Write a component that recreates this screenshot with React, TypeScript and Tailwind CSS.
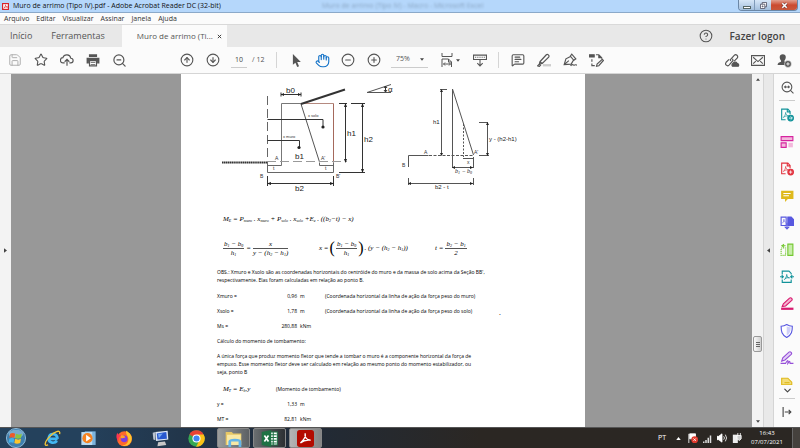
import type { ReactNode } from 'react';
import {
  ChevronDown,
  CircleArrowDown,
  CircleArrowUp,
  CircleHelp,
  CircleMinus,
  CirclePlus,
  Hand,
  MessageSquareText,
  Save,
  Star,
  ZoomOut,
} from 'lucide-react';

interface ToolButtonProps {
  label: string;
  children: ReactNode;
  className?: string;
}

const ToolButton = ({ label, children, className = 'w-[26px]' }: ToolButtonProps) => (
  <button aria-label={label} className={`flex h-6 shrink-0 items-center justify-center ${className}`}>
    {children}
  </button>
);

const Caret = ({ className = '' }: { className?: string }) => (
  <svg viewBox="0 0 6 4" className={`h-[3px] w-1 shrink-0 ${className}`} fill="#444">
    <path d="M0 0h6L3 4z" />
  </svg>
);

const TitleBar = () => (
  <header className="flex h-[13px] shrink-0 items-center justify-between border-b border-[#8ba9c9] bg-[#b5d7fb] pl-[2px] text-[7px]">
    <div className="flex w-80 items-center gap-1">
      <svg viewBox="0 0 12 12" className="size-[7px] shrink-0">
        <rect x="1" y="1" width="10" height="10" fill="#fff" stroke="#d8232a" strokeWidth="2" />
        <path d="M3 9c2-2 3-4 3-6 0 3 1 4 4 4-3-1-5 0-7 2z" fill="none" stroke="#d8232a" />
      </svg>
      <h1 className="leading-3 whitespace-nowrap text-[#111]">
        Muro de arrimo (Tipo IV).pdf - Adobe Acrobat Reader DC (32-bit)
      </h1>
    </div>
    <span className="flex-1 leading-3 whitespace-nowrap text-[#8aa6c4] blur-[1px]">
      Muro de arrimo (Tipo IV) - Macro - Microsoft Excel
    </span>
    <div className="mr-[2px] flex h-[11px] self-start overflow-hidden rounded-b-sm border border-t-0 border-[#6b87a6]">
      <button aria-label="Minimizar" className="flex w-4 items-center justify-center border-r border-[#7f9ab8] bg-linear-to-b from-[#d6e6f7] to-[#a3bfdd]">
        <span className="mt-1 h-[3px] w-2 border border-[#566] bg-white" />
      </button>
      <button aria-label="Restaurar" className="flex w-4 items-center justify-center bg-linear-to-b from-[#d6e6f7] to-[#a3bfdd]">
        <svg viewBox="0 0 8 8" className="size-[7px]" fill="#fff" stroke="#556">
          <path d="M2.500.500h5v5h-5z" />
          <path d="M.5 2.500h5v5h-5zM2.500 4.500h1v1h-1z" />
        </svg>
      </button>
      <button aria-label="Fechar" className="flex w-[26px] items-center justify-center bg-linear-to-b from-[#e0a091] via-[#cb4a30] to-[#c8573c]">
        <svg viewBox="0 0 8 8" className="size-[7px]">
          <path d="m1.500 1.500 5 5m0-5-5 5" stroke="#633" strokeWidth="3" />
          <path d="m1.500 1.500 5 5m0-5-5 5" stroke="#fff" strokeWidth="1.800" />
        </svg>
      </button>
    </div>
  </header>
);

const MenuBar = () => (
  <nav className="flex h-[11px] shrink-0 items-center gap-[7px] bg-[#fbfbfb] pl-1 text-[7px] leading-[10px] text-[#333]">
    {['Arquivo', 'Editar', 'Visualizar', 'Assinar', 'Janela', 'Ajuda'].map((item) => (
      <button key={item}>{item}</button>
    ))}
  </nav>
);

const TabBar = () => (
  <div className="flex h-[23px] shrink-0 border-t border-[#d9d9d9] bg-[#e8e8e8] text-[#555]">
    <button className="pl-[10px] text-[9px]">Início</button>
    <button className="ml-[19px] text-[9px]">Ferramentas</button>
    <div className="ml-[17px] flex w-[105px] items-center justify-between bg-[#fbfbfb] pr-[5px] pl-[15px]">
      <button className="text-[8px] whitespace-nowrap">Muro de arrimo (Ti...</button>
      <button aria-label="Fechar guia">
        <svg viewBox="0 0 6 6" className="size-[5px]" stroke="#333" strokeWidth="1.100">
          <path d="m1 1 4 4m0-4-4 4" />
        </svg>
      </button>
    </div>
    <div className="ml-auto flex items-center gap-[17px] pr-[15px]">
      <button aria-label="Ajuda">
        <CircleHelp size={14} color="#555" strokeWidth={1.8} />
      </button>
      <button className="text-[10px] font-semibold text-[#444]">Fazer logon</button>
    </div>
  </div>
);

const Toolbar = () => (
  <div className="flex h-[27px] shrink-0 items-center border-b border-[#d5d5d5] bg-[#fbfbfb] pr-[3px] pl-[2px] text-[7px] text-[#555]">
    <ToolButton label="Salvar"><Save size={14} color="#aaa" strokeWidth={1.6} /></ToolButton>
    <ToolButton label="Favorito"><Star size={14} strokeWidth={1.9} /></ToolButton>
    <ToolButton label="Enviar para a nuvem">
      <svg viewBox="0 0 24 24" className="size-[14px]" fill="none" stroke="currentColor" strokeWidth="2">
        <path d="M8 17H5.500a4.500 4.500 0 0 1-.5-9A7 7 0 0 1 18.500 9a4 4 0 0 1 0 8H16" />
        <path d="M12 22V11m-4 4 4-4 4 4" />
      </svg>
    </ToolButton>
    <ToolButton label="Imprimir">
      <svg viewBox="0 0 24 24" className="size-[14px]" fill="currentColor">
        <path d="M5 2h14v5H5zM1 8h22v10h-4v-4H5v4H1z" />
        <path d="M6 13h12v9H6z" fill="#fff" stroke="currentColor" strokeWidth="2" />
        <path d="M8 16h8v1H8zM8 19h8v1H8z" />
      </svg>
    </ToolButton>
    <ToolButton label="Reduzir visualização"><ZoomOut size={15} strokeWidth={1.9} /></ToolButton>
    <ToolButton label="Página anterior" className="ml-[42px] w-[26px]"><CircleArrowUp size={14} strokeWidth={1.9} /></ToolButton>
    <ToolButton label="Próxima página"><CircleArrowDown size={14} strokeWidth={1.9} /></ToolButton>
    <input aria-label="Página" defaultValue="10" className="ml-[5px] h-4 w-4 border-b border-[#ccc] text-center text-[#444]" />
    <span className="w-[30px] border-r border-[#d5d5d5] py-1 pl-[5px] leading-2 whitespace-nowrap">/ 12</span>
    <ToolButton label="Selecionar" className="ml-[6px] w-[26px]">
      <svg viewBox="0 0 12 18" className="h-[13px] w-[9px]" fill="currentColor">
        <path d="M1 0v15l3.500-3 2.500 6 2.500-1-2.500-6H12z" />
      </svg>
    </ToolButton>
    <ToolButton label="Mão"><Hand size={15} color="#1473c8" strokeWidth={1.8} /></ToolButton>
    <ToolButton label="Menos zoom"><CircleMinus size={14} strokeWidth={1.9} /></ToolButton>
    <ToolButton label="Mais zoom"><CirclePlus size={14} strokeWidth={1.9} /></ToolButton>
    <div className="ml-1 flex h-4 w-[37px] items-center border-b border-[#ccc] pr-1 pl-[5px]">
      <select aria-label="Zoom" className="w-6 appearance-none">
        <option>75%</option>
      </select>
      <Caret />
    </div>
    <ToolButton label="Ajustar largura" className="ml-3 w-5 gap-[3px]">
      <svg viewBox="0 0 24 28" className="h-[14px] w-3 shrink-0" fill="none" stroke="currentColor" strokeWidth="2">
        <path d="M2 0v7h20V0M2 28V12h13l6 6v10M15 12v6h6M5 22h14M8 19l-3 3 3 3m8-6 3 3-3 3" />
      </svg>
      <Caret />
    </ToolButton>
    <ToolButton label="Barra de rolagem" className="ml-[7px] w-[26px]">
      <svg viewBox="0 0 26 24" className="h-[13px] w-[14px]" fill="none" stroke="currentColor" strokeWidth="2">
        <path d="M1 2h24v8H1z" />
        <path d="M4 6h18" strokeDasharray="2 2" />
        <path d="M13 10v12m-5-5 5 5 5-5" />
      </svg>
    </ToolButton>
    <span className="ml-[5px] h-4 w-px bg-[#d5d5d5]" />
    <ToolButton label="Comentário" className="ml-[6px] w-[26px]">
      <MessageSquareText size={14} strokeWidth={1.9} />
    </ToolButton>
    <ToolButton label="Realçar">
      <svg viewBox="0 0 24 24" className="size-[14px]" fill="none" stroke="currentColor" strokeWidth="2">
        <path d="M10 21h14" stroke="#ccc" strokeWidth="4" />
        <path d="M5 15 16 3c2-2 6 1 4 4L9 18l-5 1zM5 15l4 3M1 22l3-3 2 2-2 2z" />
      </svg>
    </ToolButton>
    <ToolButton label="Assinar">
      <svg viewBox="0 0 24 24" className="size-[14px]" fill="none" stroke="currentColor" strokeWidth="2">
        <path d="m2 20 3-10 8-4 5 6-4 7zM2 20l8-7M12 6l3-4 7 8-4 3" />
        <path d="M13 22c3-4 5-1 6-1s2-2 5 0" />
      </svg>
    </ToolButton>
    <ToolButton label="Carimbo e edição">
      <svg viewBox="0 0 26 24" className="size-[15px]" fill="none" stroke="currentColor" strokeWidth="2">
        <path d="M1 2h8v4H1z" fill="currentColor" />
        <path d="M12 2h5l5 5v2M5 10v4M5 17v4h5M17 2v5h5M13 22l1-4 9-8 2 2-8 9z" />
      </svg>
    </ToolButton>
    <ToolButton label="Compartilhar link" className="ml-auto w-[26px]">
      <svg viewBox="0 0 26 24" className="size-[15px]" fill="none" stroke="currentColor" strokeWidth="2">
        <path d="m10 13-1-2 7-8c3-3 8 1 5 5l-5 5M13 9l1 3-7 8c-3 3-8-1-5-5l5-5" />
        <path d="M13 22a3 3 0 0 1 1-5 4 4 0 0 1 7 0 3 3 0 0 1 2 5z" fill="currentColor" />
      </svg>
    </ToolButton>
    <ToolButton label="E-mail">
      <svg viewBox="0 0 26 20" className="h-[11px] w-[14px]" fill="none" stroke="currentColor" strokeWidth="2">
        <path d="M1 1h24v18H1z" />
        <path d="m4 4 9 8 9-8M4 16l5-5m13 5-5-5" />
      </svg>
    </ToolButton>
    <ToolButton label="Adicionar pessoas">
      <svg viewBox="0 0 26 24" className="size-[15px]" fill="currentColor">
        <path d="M10 1c7 0 6 8 3 11v2l5 2-2 4H1c0-4 3-5 6-6v-2C4 9 3 1 10 1z" />
        <circle cx="19" cy="18" r="6" stroke="#fbfbfb" />
        <path d="M19 15v6m-3-3h6" stroke="#fff" strokeWidth="1.500" />
      </svg>
    </ToolButton>
  </div>
);

/* Section of the retaining wall and the triangle of soil above it */
const WallDiagrams = () => (
  <svg viewBox="181 74 404 130" className="h-[130px] w-full" fill="none" stroke="#333" strokeWidth="1" fontFamily="Liberation Sans, Arial, sans-serif">
    <path d="M281.500 165.500v-62h20" stroke="#777" />
    <path d="M301.500 103.500h32" stroke="#b58a80" />
    <path d="M333.500 103.500v59" stroke="#a5695c" />
    <path d="M267.500 162.500v10h66v-10M267.500 165.500h14M319.500 162.500v3h14" stroke="#666" />
    <path d="m301 104 18.500 58" stroke="#555" />
    <path d="M267.500 96v67" strokeDasharray="9 4" stroke="#666" />
    <path d="M267 161.500h80" strokeDasharray="9 4" stroke="#999" />
    <path d="m301 104 44-14.500" strokeWidth="2" />
    <path d="M222 162.500h45" strokeWidth="2" strokeDasharray="1.500 .4" />
    <path d="M281 94.500h20m-20-2v4m20-4v4M267.500 119.500h55.500v7M267.500 140.500h32v7" />
    <path d="M267 183.500h67M267.500 176v10M333.500 176v10" />
    <path d="M345.500 104v58M362.500 104v68M339 103.500h8M351 103.500h14M339 172.500h26" />
    <path d="M367 92.500h24m-24 0 24-8" stroke="#555" />
    <path d="M385.500 86v6m-1.500-4 1.500-2 1.500 2m-3 2 1.500 2 1.500-2" />
    <g fill="#222" stroke="none">
      <circle cx="323" cy="127" r="1.600" />
      <circle cx="299" cy="147.500" r="1.600" />
      <path d="m344 107 1.500-4 1.500 4zm0 52 1.500 4 1.500-4zm17-52 1.500-4 1.500 4zm0 62 1.500 4 1.500-4zM267 183.500l4-1.500v3zm67 0-4-1.500v3zM281 94.500l3-1.500v3zm20 0-3-1.500v3z" />
    </g>
    <g fill="#222" stroke="none" fontSize="8">
      <text x="286" y="93">b0</text>
      <text x="295" y="159">b1</text>
      <text x="295" y="191">b2</text>
      <text x="347" y="136">h1</text>
      <text x="364" y="142">h2</text>
      <text x="388" y="92">α</text>
    </g>
    <g fill="#333" stroke="none" fontSize="4">
      <text x="308" y="117">x solo</text>
      <text x="283" y="138">x muro</text>
    </g>
    <g fill="#333" stroke="none" fontSize="5">
      <text x="275" y="160">A</text>
      <text x="321" y="160">A'</text>
      <text x="273" y="170">t</text>
      <text x="325" y="170">t</text>
      <text x="260" y="178">B</text>
      <text x="336" y="178">B'</text>
      <text x="424" y="154">A</text>
      <text x="474" y="154">A'</text>
      <text x="402" y="167">B</text>
      <text x="467" y="164">x</text>
    </g>

    <g stroke="#555">
      <path d="M452.500 89v79M452.500 89l21 66" />
      <path d="M408.500 167v-11.500h20M479 155.500h10" />
      <path d="M429 155.500h44" strokeDasharray="3 1.500" />
      <path d="M463.500 124v33" strokeDasharray="2 1.500" />
      <path d="M441.500 89v66M440 89.500h7M487.500 122v33M479 122.500h9M463 158.500h10M452 167.500h21M473.500 157v11M408 183.500h65M408.500 178v7M473.500 178v7" />
    </g>
    <g fill="#222" stroke="none">
      <path d="m440 92 1.500-3 1.500 3zm0 61 1.500 3 1.500-3zm46-28 1.500-3 1.500 3zm0 28 1.500 3 1.500-3zM408 183.500l3-1.500v3zm65 0-3-1.500v3zM452 167.500l3-1.500v3zm21 0-3-1.500v3z" />
      <g fontSize="6">
        <text x="433" y="124">h1</text>
        <text x="489" y="141">y - (h2-h1)</text>
        <text x="435" y="189">b2 - t</text>
      </g>
      <text x="455" y="173" fontSize="6" fontFamily="Liberation Serif, serif" fontStyle="italic">
        b<tspan fontSize="4" dy="1">1</tspan>
        <tspan dy="-1"> − b</tspan>
        <tspan fontSize="4" dy="1">0</tspan>
      </text>
    </g>
  </svg>
);

const Sub = ({ children }: { children: ReactNode }) => (
  <sub className="text-[4px] leading-none">{children}</sub>
);

const Fraction = ({ top, bottom }: { top: ReactNode; bottom: ReactNode }) => (
  <span className="inline-flex flex-col items-center">
    <span className="border-b border-[#555] px-px leading-[8px]">{top}</span>
    <span className="leading-[8px]">{bottom}</span>
  </span>
);

const Equations = () => (
  <div className="pl-[42px] font-['Liberation_Serif',serif] text-[7px] font-medium whitespace-nowrap text-black italic">
    <p className="mt-[10px] h-[10px] leading-[10px]">
      M<Sub>E</Sub> = P<Sub>muro</Sub> . x<Sub>muro</Sub> + P<Sub>solo</Sub> . x<Sub>solo</Sub> +E<Sub>e</Sub> . ((b<Sub>2</Sub>−t) − x)
    </p>
    <div className="mt-[14px] flex h-5 items-center">
      <div className="flex w-24 items-center gap-[2px]">
        <Fraction top={<>b<Sub>1</Sub> − b<Sub>0</Sub></>} bottom={<>h<Sub>1</Sub></>} />
        =
        <Fraction top="x" bottom={<span className="-mt-px block border-t border-[#555]">y − (h<Sub>2</Sub> − h<Sub>1</Sub>)</span>} />
      </div>
      <div className="flex w-[116px] items-center gap-px">
        x =
        <span className="text-[16px] leading-none not-italic">(</span>
        <Fraction top={<>b<Sub>1</Sub> − b<Sub>0</Sub></>} bottom={<>h<Sub>1</Sub></>} />
        <span className="text-[16px] leading-none not-italic">)</span>
        <span>. (y − (h<Sub>2</Sub> − h<Sub>1</Sub>))</span>
      </div>
      <div className="flex items-center gap-[2px]">
        t =
        <Fraction top={<>b<Sub>2</Sub> − b<Sub>1</Sub></>} bottom="2" />
      </div>
    </div>
  </div>
);

interface ResultRow {
  name: string;
  value: string;
  unit: string;
  note?: string;
  mark?: string;
}

const stabilizing: ResultRow[] = [
  { name: 'Xmuro =', value: '0,96', unit: 'm', note: '(Coordenada horizontal da linha de ação da força peso do muro)' },
  { name: 'Xsolo =', value: '1,78', unit: 'm', note: '(Coordenada horizontal da linha de ação da força peso do solo)', mark: '.' },
  { name: 'Ms =', value: '280,88', unit: 'kNm' },
];

const overturning: ResultRow[] = [
  { name: 'y =', value: '1,33', unit: 'm' },
  { name: 'MT =', value: '82,81', unit: 'kNm' },
];

const Results = ({ rows }: { rows: ResultRow[] }) => (
  <table className="w-full table-fixed">
    <tbody>
      {rows.map((row) => (
        <tr key={row.name} className="h-[15px]">
          <th scope="row" className="w-10 text-left font-medium">{row.name}</th>
          <td className="w-10 text-right">{row.value}</td>
          <td className="w-7 pl-[3px]">{row.unit}</td>
          <td className="w-[174px]">{row.note}</td>
          <td className="pt-1 text-[7px]">{row.mark}</td>
        </tr>
      ))}
    </tbody>
  </table>
);

const DocumentPage = () => (
  <article className="w-[404px] shrink-0 overflow-hidden bg-white">
    <WallDiagrams />
    <Equations />
    <div className="pt-[10px] pr-10 pl-9 font-['Open_Sans',sans-serif] text-[5px] leading-[8px] font-medium whitespace-nowrap text-black">
      <p>
        OBS.: Xmuro e Xsolo são as coordenadas horizontais do centróide do muro e da massa de solo acima da Seção BB',
        <br />
        respectivamente. Elas foram calculadas em relação ao ponto B.
      </p>
      <div className="pt-1">
        <Results rows={stabilizing} />
      </div>
      <h2 className="mt-1 font-medium">Cálculo do momento de tombamento:</h2>
      <p className="mt-[7px]">
        A única força que produz momento fletor que tende a tombar o muro é a componente horizontal da força de
        <br />
        empuxo. Esse momento fletor deve ser calculado em relação ao mesmo ponto do momento estabilizador, ou
        <br />
        seja, ponto B
      </p>
      <div className="mt-2 flex h-[10px] items-center">
        <span className="w-[59px] pl-[6px] font-['Liberation_Serif',serif] text-[7px] italic">
          M<Sub>T</Sub> = E<Sub>h</Sub>.y
        </span>
        <span>(Momento de tombamento)</span>
      </div>
      <div className="pt-[2px]">
        <Results rows={overturning} />
      </div>
    </div>
  </article>
);

const SideArrow = ({ className = '' }: { className?: string }) => (
  <svg viewBox="0 0 4 6" className={`h-[5px] w-[3px] ${className}`} fill="#444">
    <path d="M0 0v6l4-3z" />
  </svg>
);

const panelTools = [
  {
    label: 'Exportar PDF',
    icon: (
      <g fill="none" stroke="#12939a" strokeWidth="2">
        <path d="M10 21H3V2h11l4 4v5M13 2v5h5" />
        <path d="M6 17c4-4 4-8 4-9 0 4 3 6 5 6-4 0-7 1-9 3z" strokeWidth="1.200" />
        <circle cx="19" cy="18" r="5" fill="#12939a" />
        <path d="M16 18h6m-3-3 3 3-3 3" stroke="#fff" strokeWidth="1.400" />
      </g>
    ),
  },
  {
    label: 'Organizar páginas',
    icon: (
      <g fill="#f3b8dc" stroke="#d6249f" strokeWidth="2">
        <path d="M2 3h21v7H2zM2 14h9v8H2z" />
        <path d="M15 14h8v8h-8z" stroke="none" />
      </g>
    ),
  },
  {
    label: 'Criar PDF',
    icon: (
      <g fill="none" stroke="#e2333f" strokeWidth="2">
        <path d="M10 21H3V2h11l4 4v5M13 2v5h5" />
        <path d="M6 17c4-4 4-8 4-9 0 4 3 6 5 6-4 0-7 1-9 3z" strokeWidth="1.200" />
        <circle cx="19" cy="18" r="5" fill="#e2333f" />
        <path d="M19 15v6m-3-3h6" stroke="#fff" strokeWidth="1.400" />
      </g>
    ),
  },
  {
    label: 'Comentar',
    icon: (
      <g>
        <path d="M2 3h22v15H14l-5 5v-5H2z" fill="#dfb91c" />
        <path d="M6 8h13M6 12h10" stroke="#fff" strokeWidth="2" />
      </g>
    ),
  },
  {
    label: 'Combinar arquivos',
    icon: (
      <g fill="none" stroke="#5858e0" strokeWidth="2">
        <path d="M2 2h9v15H2z" />
        <path d="M14 2h6l4 4v11H14z" fill="#5858e0" />
        <path d="M4 13c3-3 3-5 3-7 0 3 1 4 3 5" strokeWidth="1.200" />
        <path d="M12.500 12v11m-4-4 4 4 4-4" />
      </g>
    ),
  },
  {
    label: 'Comparar arquivos',
    icon: (
      <g fill="none" stroke="#75c832" strokeWidth="2">
        <path d="M14 2h9v20h-9z" fill="#c7edaa" />
        <path d="M2 9h8v13H2z" strokeDasharray="2 1.500" />
        <path d="M2 5h8M7 2 4 5l3 3" />
      </g>
    ),
  },
  {
    label: 'Compactar PDF',
    icon: (
      <g fill="none" stroke="#12939a" strokeWidth="2">
        <path d="M4 8V2h12l4 4v2M4 17v5h16v-5" />
        <path d="M0 12h5m-2-3 3 3-3 3M25 12h-5m2-3-3 3 3 3" />
        <path d="M8 17c3-3 4-7 4-9 0 4 2 6 5 6-4-1-6 0-9 3z" strokeWidth="1.500" />
      </g>
    ),
  },
  {
    label: 'Editar PDF',
    icon: (
      <g fill="none" stroke="#d81b70" strokeWidth="2">
        <path d="m4 17 2-5L17 2c3-2 6 2 4 4L10 16z" fill="#f6b4d0" />
        <path d="M2 21h22" strokeWidth="4" />
      </g>
    ),
  },
  {
    label: 'Proteger',
    icon: (
      <g stroke="#5858e0" strokeWidth="2">
        <path d="M12 1c3 2 6 3 10 3 0 9-1 15-10 20C3 19 2 13 2 4c4 0 7-1 10-3z" fill="#fff" />
        <path d="M12 4c2 1 4 2 7 2 0 7-1 11-7 15z" fill="#cfcff8" stroke="none" />
      </g>
    ),
  },
  {
    label: 'Preencher e assinar',
    icon: (
      <g fill="none" stroke="#9650d8" strokeWidth="2">
        <path d="m3 18 2-6L16 2c3-2 6 2 4 4L9 16z" fill="#e5d2f7" />
        <path d="M1 22h9c4-7 5-6 4 0 4-5 4-4 4 0h6" />
      </g>
    ),
  },
];

const ToolsPanel = () => (
  <aside className="flex w-[27px] shrink-0 flex-col items-center border-l border-[#d5d5d5] bg-[#fbfbfb]">
    <button aria-label="Pesquisar ferramentas" className="flex h-[26px] w-full items-center justify-center">
      <svg viewBox="0 0 24 24" className="size-[13px]" fill="none" stroke="#555" strokeWidth="2">
        <circle cx="11" cy="11" r="9" />
        <path d="m17 17 6 6M7 11h8" />
        <path d="M9 8v6l-4-3zM13 8v6l4-3z" fill="#555" stroke="none" />
      </svg>
    </button>
    <hr className="w-4 border-[#ccc]" />
    {panelTools.map((tool) => (
      <button key={tool.label} aria-label={tool.label} className="flex h-[27px] w-full shrink-0 items-center justify-center">
        <svg viewBox="0 0 25 25" className="size-[14px]">{tool.icon}</svg>
      </button>
    ))}
    <button aria-label="Mais ferramentas" className="flex flex-col items-center pt-[6px]">
      <svg viewBox="0 0 25 14" className="h-2 w-[14px]">
        <path d="M3 14V2h11l7 7v5z" fill="#f3dd7a" stroke="#dfb91c" strokeWidth="2" />
        <path d="M8 10h9" stroke="#dfb91c" strokeWidth="2" />
      </svg>
      <ChevronDown size={11} color="#444" strokeWidth={2.5} />
    </button>
    <hr className="mt-[2px] w-4 border-[#ccc]" />
    <button aria-label="Recolher painel" className="mt-2">
      <svg viewBox="0 0 18 18" className="size-[10px]" fill="none" stroke="#444" strokeWidth="2">
        <path d="M2 0v18M5 9h11m-4-4 4 4-4 4" />
      </svg>
    </button>
  </aside>
);

const Workspace = () => (
  <main className="flex min-h-0 flex-1 overflow-hidden bg-[#f3f3f3]">
    <button aria-label="Abrir painel de navegação" className="flex w-[11px] shrink-0 items-center justify-center">
      <SideArrow />
    </button>
    <section className="flex min-w-0 flex-1 justify-center bg-[#989898] pl-[3px]">
      <DocumentPage />
    </section>
    <div className="flex w-[11px] shrink-0 flex-col items-center bg-[#f3f3f3] py-1">
      <Caret className="rotate-180" />
      <div className="mt-auto mb-[68px] flex h-4 w-[9px] flex-col items-center justify-center gap-px rounded-xs border border-[#999] bg-linear-to-r from-[#fafafa] to-[#cfcfcf]">
        <span className="h-px w-1 bg-[#666]" />
        <span className="h-px w-1 bg-[#666]" />
        <span className="h-px w-1 bg-[#666]" />
      </div>
      <Caret />
    </div>
    <button aria-label="Fechar painel de ferramentas" className="flex w-[10px] shrink-0 items-center justify-center border-l border-[#d5d5d5] bg-[#e9e9e9]">
      <SideArrow className="rotate-180" />
    </button>
    <ToolsPanel />
  </main>
);

const pinnedApps = [
  {
    label: 'Internet Explorer',
    icon: (
      <g fill="none">
        <path d="M20 13H7c0 7 9 7 12 3M7 12c1-8 12-8 13 1" stroke="#43b7f2" strokeWidth="4" />
        <path d="M23 6c2-8-9-3-14 3C1 17-1 25 6 22" stroke="#f3c537" strokeWidth="2" />
      </g>
    ),
  },
  {
    label: 'Windows Media Player',
    icon: (
      <g>
        <path d="M7 2h16v20H7z" fill="#7cb4dd" />
        <path d="M2 3h16v19H2z" fill="#bcdcf2" />
        <circle cx="11" cy="12" r="7.500" fill="#f58220" />
        <path d="m9 7 7 5-7 5z" fill="#fff" />
      </g>
    ),
  },
  {
    label: 'Firefox',
    icon: (
      <g>
        <circle cx="12.500" cy="13" r="11" fill="#ff6a2b" />
        <path d="M15 1c5 3 9 7 8 13-1 7-8 11-14 9 7-1 10-6 9-11s-4-6-3-11z" fill="#ffc62e" />
        <path d="M2 4c1 4 4 2 6 4-4 2-5 5-4 9C0 13 0 8 2 4z" fill="#ff3650" />
        <circle cx="12" cy="13" r="5" fill="#7a3ee0" />
        <path d="M7 8c4-1 6 1 7 3-3 0-4 2-7 1z" fill="#ffa22b" />
      </g>
    ),
  },
  {
    label: 'Computador',
    icon: (
      <g>
        <path d="M1 4 5 3v12l-3-1z" fill="#b9c3d0" />
        <path d="M5 3 23 1l1 13-18 2z" fill="#dce6f4" />
        <path d="m7 5 14-2 1 10-14 1z" fill="#2858cf" />
        <path d="m9 6 7-1-6 7z" fill="#73a7f2" />
        <path d="m9 18 10-1 2 5-13 2z" fill="#c7c7c7" />
      </g>
    ),
  },
  {
    label: 'Google Chrome',
    icon: (
      <g>
        <circle cx="12.500" cy="12.500" r="12" fill="#35a853" />
        <path d="M2 6.500a12 12 0 0 1 21 0l-10.500 6z" fill="#ea4335" />
        <path d="M23 6.500a12 12 0 0 1-11 18l6-12-5-6z" fill="#fbc116" />
        <circle cx="12.500" cy="12.500" r="6" fill="#fff" />
        <circle cx="12.500" cy="12.500" r="4.500" fill="#4285f4" />
      </g>
    ),
  },
];

const openApps = [
  {
    label: 'Windows Explorer',
    icon: (
      <g>
        <path d="M1 3h9l2 2h12v17H1z" fill="#e7c765" />
        <path d="M3 7h20v15H3z" fill="#f9e9a6" />
        <path d="M7 25v-8c0-3 15-3 15 0v8" fill="none" stroke="#65b5e8" strokeWidth="4" />
      </g>
    ),
  },
  {
    label: 'Excel',
    icon: (
      <g>
        <path d="M12 3h12v19H12z" fill="#fff" stroke="#1f7244" strokeWidth="1.500" />
        <path d="M18 3v19M14 7h9M14 11h9M14 15h9M14 19h9" stroke="#1f7244" strokeWidth="1.500" />
        <path d="M1 3 15 0v25L1 22z" fill="#1f7244" />
        <path d="m5 8 6 9m0-9-6 9" stroke="#fff" strokeWidth="2.400" />
      </g>
    ),
  },
  {
    label: 'Adobe Acrobat Reader',
    icon: (
      <g>
        <rect width="25" height="25" rx="4" fill="#b30b00" />
        <path d="M5 19c6-5 8-10 7-14-1 5 2 10 8 10-6-1-10 0-15 4z" fill="none" stroke="#fff" strokeWidth="2" />
      </g>
    ),
  },
];

const Taskbar = () => (
  <footer className="flex h-[21px] shrink-0 items-center border-t border-[#555] bg-linear-to-r from-[#24415c] from-10% via-[#1f2b3a] via-35% to-[#2b2723] to-60% text-[7px] text-white">
    <button aria-label="Iniciar" className="flex w-8 shrink-0 justify-center">
      <svg viewBox="0 0 24 24" className="size-5">
        <circle cx="12" cy="12" r="11.500" fill="#3f7fae" stroke="#9cc8e4" />
        <ellipse cx="12" cy="7" rx="9" ry="5" fill="#91bddb" opacity=".7" />
        <path d="M5 7q3-2 6 0l-1 5q-3-2-6 0z" fill="#ef5a28" />
        <path d="M12 7q4 2 7 0l-1 5q-4 2-7 0z" fill="#8bc53f" />
        <path d="M4 13q3-2 6 0l-1 5q-3-2-6 0z" fill="#42b2ea" />
        <path d="M11 13q4 2 7 0l-1 5q-4 2-7 0z" fill="#fcc52c" />
      </svg>
    </button>
    <div className="flex pl-[2px]">
      {pinnedApps.map((app) => (
        <button key={app.label} aria-label={app.label} className="flex w-9 justify-center">
          <svg viewBox="0 0 25 25" className="size-[17px]">{app.icon}</svg>
        </button>
      ))}
    </div>
    <div className="flex gap-[3px] self-stretch pl-[3px]">
      {openApps.map((app) => (
        <button
          key={app.label}
          aria-label={app.label}
          className="flex w-[33px] items-center justify-center rounded-xs border border-[#888] bg-linear-to-r from-[#6a6e70] to-[#2d3033] first:from-[#9a9d9d] first:to-[#5c6063] last:from-[#b5b5b5] last:to-[#858585]"
        >
          <svg viewBox="0 0 25 25" className="size-[17px]">{app.icon}</svg>
        </button>
      ))}
    </div>
    <div className="ml-auto flex items-center gap-[5px] self-stretch">
      <button className="pr-[2px]">PT</button>
      <button aria-label="Mostrar ícones ocultos" className="pl-[3px]">
        <svg viewBox="0 0 6 4" className="h-[3px] w-[5px]" fill="#fff"><path d="M0 4h6L3 0z" /></svg>
      </button>
      <svg viewBox="0 0 12 12" className="ml-[2px] size-[10px]">
        <path d="M1 1v11M2 1h7v6H2z" fill="#fff" stroke="#fff" />
        <circle cx="8" cy="8" r="4" fill="#e23b2e" />
        <path d="m6.500 6.500 3 3m0-3-3 3" stroke="#fff" />
      </svg>
      <svg viewBox="0 0 12 12" className="size-[9px]" fill="#ddd">
        <path d="M0 10h2v2H0zM3 8h2v4H3zM6 5h2v7H6zM9 2h2v10H9z" />
      </svg>
      <svg viewBox="0 0 12 12" className="size-[10px]" fill="#fff" stroke="#fff">
        <path d="M0 4h2l4-3v10L2 8H0z" />
        <path d="M8 4q2 2 0 4M10 2q3 4 0 8" fill="none" />
      </svg>
      <svg viewBox="0 0 12 12" className="size-[10px]">
        <path d="M1 2h6v10H1z" fill="#eee" />
        <path d="M6 3h5v4L9 9 6 7zM7 0v3m3-3v3" fill="#ccc" stroke="#fff" />
      </svg>
      <time className="w-10 text-center text-[6px] leading-[9px]">16:43<br />07/07/2021</time>
      <button aria-label="Mostrar área de trabalho" className="w-2 self-stretch border-l border-[#666] bg-[#45413d]" />
    </div>
  </footer>
);

const App = () => (
  <div className="flex h-screen flex-col overflow-hidden bg-[#fbfbfb] font-['Open_Sans',sans-serif]">
    <TitleBar />
    <MenuBar />
    <TabBar />
    <Toolbar />
    <Workspace />
    <Taskbar />
  </div>
);

export default App;
